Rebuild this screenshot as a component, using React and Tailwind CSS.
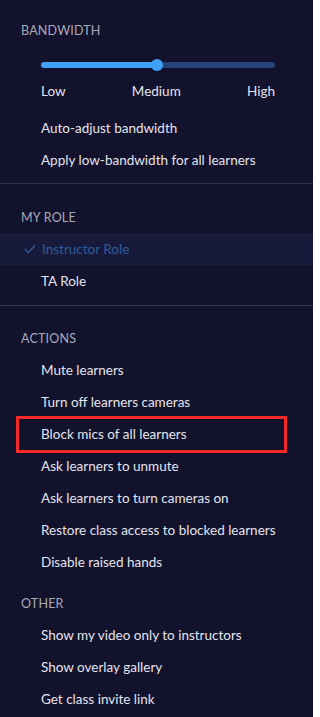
import React from "react";

const Item = ({ children }) => (
  <div className="h-8 flex items-center pl-[41px] text-[13.5px] text-[#e4e4ec]">{children}</div>
);

const Header = ({ children, className = "" }) => (
  <div className={"pl-[21px] text-[12.5px] tracking-[0.2px] text-[#a9a9b8] " + className}>{children}</div>
);

export default function App() {
  return (
    <div
      className="w-[313px] h-[717px] bg-[#12122d] overflow-hidden"
      style={{ fontFamily: "Lato, 'Noto Sans', sans-serif" }}
    >
      <div className="pt-[22px]">
        <Header>BANDWIDTH</Header>
        <div className="pl-[41px] pr-[38px] mt-[21px]">
          <div className="relative h-[6px] rounded-full bg-[#25457a]">
            <div className="absolute left-0 top-0 h-[6px] w-[116px] rounded-full bg-[#3fa2f6]" />
            <div className="absolute left-[110px] top-[-3px] w-[12px] h-[12px] rounded-full bg-[#3fa2f6]" />
          </div>
          <div className="flex justify-between mt-[13px] text-[13.5px] text-[#e4e4ec]">
            <span>Low</span>
            <span>Medium</span>
            <span>High</span>
          </div>
        </div>
        <div className="mt-[11px]">
          <Item>Auto-adjust bandwidth</Item>
          <Item>Apply low-bandwidth for all learners</Item>
        </div>
      </div>
      <div className="mt-[7px] border-t border-[#34344e]" />
      <div className="pt-[25px]">
        <Header>MY ROLE</Header>
        <div className="mt-[5px] h-8 flex items-center bg-[#171a3a] text-[13.5px] text-[#2d5b9b]">
          <svg className="ml-[24px] mr-[6px]" width="12" height="10" viewBox="0 0 12 10" fill="none">
            <path d="M1 5.2 L4.2 8.4 L11 1.4" stroke="#2d5b9b" strokeWidth="1.4" />
          </svg>
          <span>Instructor Role</span>
        </div>
        <Item>TA Role</Item>
      </div>
      <div className="mt-[8px] border-t border-[#34344e]" />
      <div className="pt-[24px]">
        <Header>ACTIONS</Header>
        <div className="mt-[6px]">
          <Item>Mute learners</Item>
          <Item>Turn off learners cameras</Item>
          <div className="relative">
            <Item>Block mics of all learners</Item>
            <div className="absolute left-[16px] top-[-3px] w-[271px] h-[37px] border-[3px] border-[#f42a2a]" />
          </div>
          <Item>Ask learners to unmute</Item>
          <Item>Ask learners to turn cameras on</Item>
          <Item>Restore class access to blocked learners</Item>
          <Item>Disable raised hands</Item>
        </div>
      </div>
      <div className="pt-[16px]">
        <Header>OTHER</Header>
        <div className="mt-[6px]">
          <Item>Show my video only to instructors</Item>
          <Item>Show overlay gallery</Item>
          <Item>Get class invite link</Item>
        </div>
      </div>
    </div>
  );
}
